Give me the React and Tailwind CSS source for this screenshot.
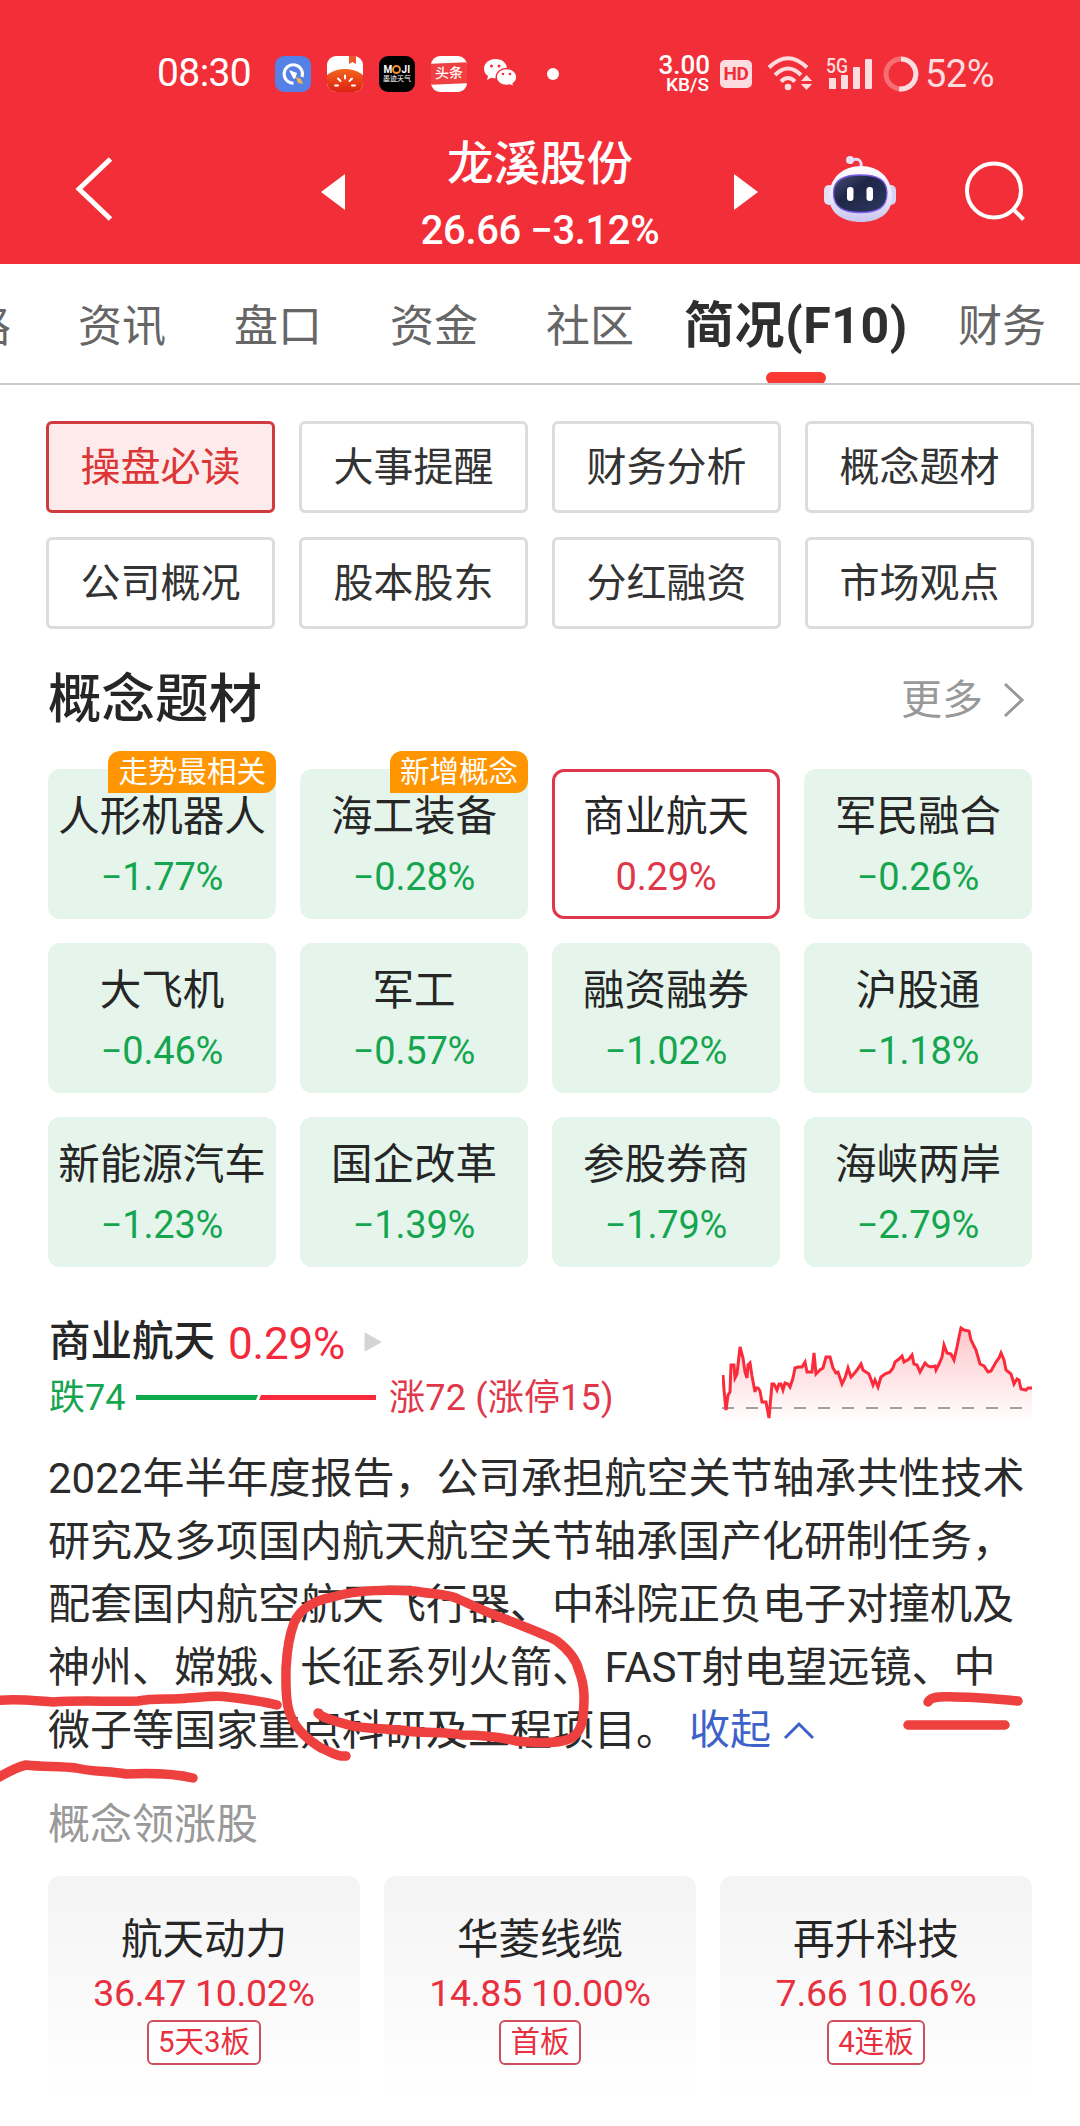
import React from "react"

const tabs = [
  { name: "资讯", className: "w-[156px]" },
  { name: "盘口", className: "w-[156px]" },
  { name: "资金", className: "w-[156px]" },
  { name: "社区", className: "w-[156px]" },
]

const sections = [
  "操盘必读",
  "大事提醒",
  "财务分析",
  "概念题材",
  "公司概况",
  "股本股东",
  "分红融资",
  "市场观点",
]

const concepts = [
  { name: "人形机器人", change: "−1.77%", badge: "走势最相关" },
  { name: "海工装备", change: "−0.28%", badge: "新增概念" },
  { name: "商业航天", change: "0.29%", active: true },
  { name: "军民融合", change: "−0.26%" },
  { name: "大飞机", change: "−0.46%" },
  { name: "军工", change: "−0.57%" },
  { name: "融资融券", change: "−1.02%" },
  { name: "沪股通", change: "−1.18%" },
  { name: "新能源汽车", change: "−1.23%" },
  { name: "国企改革", change: "−1.39%" },
  { name: "参股券商", change: "−1.79%" },
  { name: "海峡两岸", change: "−2.79%" },
]

const lines = [
  "2022年半年度报告，公司承担航空关节轴承共性技术",
  "研究及多项国内航天航空关节轴承国产化研制任务，",
  "配套国内航空航天飞行器、中科院正负电子对撞机及",
  "神州、嫦娥、长征系列火箭、 FAST射电望远镜、中",
]

const leaders = [
  { name: "航天动力", price: "36.47 10.02%", tag: "5天3板" },
  { name: "华菱线缆", price: "14.85 10.00%", tag: "首板" },
  { name: "再升科技", price: "7.66 10.06%", tag: "4连板" },
]

// intraday line of the selected concept
const points =
  "1,25 2,40 4,60 6,45 8,42 9,15 12,15 13,28 15,24 18,-3 21,8 23,22 25,28 26,15 28,13 30,26 33,42 34,38 36,38 38,41 40,52 44,52 47,68 50,34 52,34 55,40 57,34 59,34 61,40 63,33 66,34 68,37 71,28 73,18 76,17 80,17 83,12 85,22 90,22 92,3 94,24 98,20 101,18 104,7 108,7 111,18 114,23 116,22 120,34 123,28 126,18 129,27 131,25 135,20 139,14 141,20 144,22 147,24 151,35 153,30 156,37 159,27 163,24 168,22 171,18 173,12 177,9 180,6 182,12 187,9 190,5 192,14 195,15 198,22 203,13 206,16 209,17 213,16 214,20 217,14 220,7 222,-5 225,3 229,4 232,10 235,-3 237,-13 239,-22 242,-20 247,-19 249,-10 254,0 258,14 262,16 266,22 269,21 274,12 277,8 279,3 282,10 284,20 289,24 292,34 295,29 297,30 299,39 304,40 306,38 310,38"

class StatusBar extends React.Component {
  render() {
    return (
      <div className="h-[146px] pt-[1px] flex items-center text-white">
        <span className="ml-[157px] w-[118px] text-[39px] leading-none tracking-[-0.6px]">08:30</span>
        <div className="flex items-center gap-4">
          <svg width="36" height="36" viewBox="0 0 36 36">
            <rect width="36" height="36" rx="9" fill="#5580e6" />
            <path d="M27 21A9.2 9.2 0 1 0 18.500 27.200" fill="none" stroke="#fff" strokeWidth="3" />
            <path d="M14 14l8 3-1.500 5-2 1z" fill="#fff" />
            <path d="M21 21l5 2 2 5-5-1z" fill="#efb24d" />
          </svg>
          <svg width="36" height="36" viewBox="0 0 36 36">
            <defs>
              <clipPath id="tomatoBox">
                <rect width="36" height="36" rx="9" />
              </clipPath>
              <linearGradient id="tomato" x1="0" y1="0" x2="0" y2="1">
                <stop offset="0" stopColor="#f5641e" />
                <stop offset="0.700" stopColor="#dc2412" />
              </linearGradient>
            </defs>
            <g clipPath="url(#tomatoBox)">
              <rect width="36" height="36" fill="#fff" />
              <path d="M22 0h7v8l-3.500-2L22 8z" fill="#f0562a" />
              <ellipse cx="18" cy="29" rx="23" ry="16" fill="url(#tomato)" />
              <g stroke="#fff" strokeWidth="2" strokeLinecap="round">
                <path d="M8 29.500h3M11 22.500l2.500 2.500M18 19.500v3M25 22.500l-2.500 2.500M28 29.500h-3" />
              </g>
            </g>
          </svg>
          <div className="size-9 rounded-[9px] bg-black flex flex-col items-center justify-center leading-none">
            <div className="text-[10px] leading-[10px] font-bold tracking-[0.3px] flex items-center">
              M
              <i className="inline-block size-[9px] rounded-full border-2 border-[#ee8f32]" />
              JI
            </div>
            <div className="text-[7px] leading-[8px] whitespace-nowrap">墨迹天气</div>
          </div>
          <div className="size-9 rounded-[9px] bg-white flex items-center overflow-hidden">
            <div className="w-full h-[21px] bg-[#f04142] text-center text-[14px] leading-[20px] font-medium -skew-y-2">头条</div>
          </div>
          <svg width="36" height="32" viewBox="0 0 36 32">
            <path d="M12.500 1C6 1 1 5.300 1 10.700c0 3 1.600 5.600 4.100 7.400L4 22l4.300-2.300c1.300.4 2.700.6 4.200.6 6.500 0 11.500-4.300 11.500-9.700S19 1 12.500 1z" fill="#fff" />
            <path d="M23.500 10.500c-5.800 0-10.300 3.700-10.300 8.500s4.500 8.500 10.300 8.500c1.300 0 2.500-.2 3.600-.5l3.900 2-1-3.300c2.300-1.600 3.800-4 3.800-6.700 0-4.800-4.500-8.500-10.300-8.500z" fill="#fff" stroke="#f22f38" strokeWidth="1.300" />
            <g fill="#f22f38">
              <circle cx="8.500" cy="8" r="1.500" />
              <circle cx="16" cy="8" r="1.500" />
              <circle cx="20" cy="16" r="1.300" />
              <circle cx="27" cy="16" r="1.300" />
            </g>
          </svg>
        </div>
        <i className="ml-[28px] size-3 rounded-full bg-white" />
        <div className="ml-[99px] w-[54px] flex flex-col items-end text-right font-medium leading-none">
          <span className="pr-[2px] text-[26px] leading-[22px]">3.00</span>
          <span className="pr-[3px] text-[19px] leading-[18px]">KB/S</span>
        </div>
        <div className="ml-[8px] w-8 h-7 rounded-[5px] bg-[#fddcdf] text-[#f22f38] text-center text-[19px] leading-7 font-bold tracking-[-0.5px]">
          HD
        </div>
        <svg className="ml-[15px]" width="46" height="36" viewBox="0 0 46 36">
          <g fill="none" stroke="#fddcdf" strokeWidth="4">
            <path d="M2 11.500Q21 -7 40 11.500" />
            <path d="M8 19Q21 6 34 19" />
            <path d="M14 25.500Q21 18.500 28 25.500" />
          </g>
          <circle cx="21" cy="31" r="3.300" fill="#fddcdf" />
          <path d="M34 25l5.500-6 5.500 6zM34 28h11l-5.500 6z" fill="#fddcdf" />
        </svg>
        <svg className="ml-[13px]" width="49" height="36" viewBox="0 0 49 36">
          <g fill="#fddcdf">
            <text x="0" y="17" fontSize="21" fontWeight="500" textLength="22" lengthAdjust="spacingAndGlyphs">5G</text>
            <rect x="3" y="22" width="7" height="11" />
            <rect x="15" y="19" width="7" height="14" rx="1" />
            <rect x="27" y="11" width="7" height="22" rx="1" />
            <rect x="39" y="3" width="7" height="30" rx="1" />
          </g>
        </svg>
        <svg className="ml-[8px]" width="36" height="36" viewBox="0 0 36 36">
          <circle cx="18" cy="18" r="15" fill="none" stroke="#fff" strokeOpacity=".3" strokeWidth="5" />
          <path d="M18 3A15 15 0 1 1 16.100 32.900" fill="none" stroke="#fddcdf" strokeWidth="5" />
        </svg>
        <span className="ml-[6px] pt-px text-[38px] leading-none text-[#fddcdf] tracking-[-0.5px]">52%</span>
      </div>
    )
  }
}

class TitleBar extends React.Component {
  render() {
    return (
      <div className="h-[118px] -mt-[1px] flex items-start text-white">
        <svg className="ml-[74px] mt-[11px]" width="42" height="66" viewBox="0 0 42 66" fill="none" stroke="#fff" strokeWidth="5">
          <path d="M36.500 3L5 33l31.500 30" />
        </svg>
        <svg className="ml-[205px] mt-[29px]" width="25" height="36" viewBox="0 0 25 36">
          <path d="M24 0v36L0 18z" fill="#fff" />
        </svg>
        <div className="w-[388px] -mt-[13px] flex flex-col items-center">
          <h1 className="text-[46.5px] leading-[64px] font-medium">龙溪股份</h1>
          <p className="mt-[11px] text-[40px] leading-[48px] font-medium tracking-[-0.4px]">26.66 −3.12%</p>
        </div>
        <svg className="mt-[29px]" width="25" height="36" viewBox="0 0 25 36">
          <path d="M0 0v36l24-18z" fill="#fff" />
        </svg>
        <svg className="ml-[64px] mt-[10px]" width="74" height="68" viewBox="0 0 74 68">
          <defs>
            <linearGradient id="shell" x1="0" y1="0" x2="0" y2="1">
              <stop offset="0" stopColor="#fff" />
              <stop offset=".6" stopColor="#e6e4f8" />
              <stop offset="1" stopColor="#c9c5ee" />
            </linearGradient>
            <linearGradient id="visor" x1="0" y1="0" x2="1" y2="1">
              <stop offset="0" stopColor="#474c70" />
              <stop offset=".4" stopColor="#1f2747" />
              <stop offset="1" stopColor="#2d3760" />
            </linearGradient>
          </defs>
          <path d="M38 12c1-7-3-9-9-7" fill="none" stroke="#e5d9f3" strokeWidth="3" />
          <circle cx="27" cy="5" r="4" fill="#e4e0f6" />
          <rect x="1" y="30" width="10" height="20" rx="5" fill="#e3dff5" />
          <rect x="63" y="30" width="10" height="20" rx="5" fill="#d6d2f3" />
          <path d="M38 11C55 11 69 22 69 42C69 59 55 67 38 67S6 59 6 42C6 22 21 11 38 11z" fill="url(#shell)" />
          <path d="M37.500 20C55 20 64 25 64 38C64 53 54 57.500 37.500 57.500S10.500 53 10.500 38C10.500 25 20 20 37.500 20z" fill="url(#visor)" stroke="#7c5be8" strokeWidth="1.300" />
          <rect x="24" y="32" width="6.500" height="14" rx="3.200" fill="#fff" />
          <rect x="43.500" y="32" width="6.500" height="14" rx="3.200" fill="#fff" />
        </svg>
        <svg className="ml-[65px] mt-[13px]" width="64" height="64" viewBox="0 0 64 64" fill="none" stroke="#fff" strokeWidth="4">
          <circle cx="32" cy="32.500" r="27" />
          <path d="M51 51l10.500 10.500" />
        </svg>
      </div>
    )
  }
}

class Tabs extends React.Component {
  render() {
    return (
      <nav className="h-[121px] border-b-2 border-[#cbcbcb] flex overflow-hidden whitespace-nowrap text-[44px] leading-[126px] text-[#666]">
        <span className="w-[44px] -ml-[33px]">路</span>
        <div className="ml-[33px] flex">
          {tabs.map((tab) => (
            <span key={tab.name} className={`${tab.className} text-center`}>
              {tab.name}
            </span>
          ))}
        </div>
        <div className="ml-[17px] w-[222px] flex flex-col items-center text-[50px] font-bold text-[#2f2f2f]">
          <span className="h-[108px] leading-[125px] tracking-[0.6px]">简况(F10)</span>
          <i className="w-[60px] h-[12px] shrink-0 rounded-full bg-[#fa3a32]" />
        </div>
        <span className="ml-[51px]">财务</span>
      </nav>
    )
  }
}

class Concepts extends React.Component {
  render() {
    return (
      <div className="mt-[33px] ml-[48px] w-[984px] grid grid-cols-4 gap-6">
        {concepts.map((c) => (
          <div
            key={c.name}
            className={
              c.active
                ? "relative h-[150px] rounded-xl border-3 border-[#e0384a] text-[#e0384a] flex flex-col items-center"
                : "relative h-[150px] rounded-xl border-3 border-[#e5f5ec] bg-[#e5f5ec] text-[#16a54f] flex flex-col items-center"
            }
          >
            <span className="mt-[15px] h-[60px] whitespace-nowrap text-[41.5px] leading-[60px] text-[#262626]">{c.name}</span>
            <span className="mt-[8px] text-[38px] leading-[44px] tracking-[-0.2px]">{c.change}</span>
            {c.badge && (
              <span className="absolute -top-[21px] -right-[3px] h-[42px] px-[10px] rounded-xl rounded-bl-none bg-[#ff9500] text-white text-[29.5px] leading-[42px] whitespace-nowrap">
                {c.badge}
              </span>
            )}
          </div>
        ))}
      </div>
    )
  }
}

class Trend extends React.Component {
  render() {
    return (
      <div className="mt-[45px] ml-[49px] w-[983px] h-[120px] flex justify-between">
        <div>
          <div className="h-[60px] flex items-center">
            <span className="text-[41.5px] leading-[60px] font-medium text-[#262626]">商业航天</span>
            <span className="ml-[13px] pt-1 text-[44px] leading-[56px] text-[#f5293c] tracking-[-0.2px]">0.29%</span>
            <svg className="ml-[19px]" width="18" height="20" viewBox="0 0 18 20">
              <path d="M1 1l16 9-16 9z" fill="#d4d4d4" stroke="#d4d4d4" strokeLinejoin="round" />
            </svg>
          </div>
          <div className="h-[52px] flex items-center text-[36px] leading-[52px]">
            <span className="w-[87px] text-[#16a54f]">跌74</span>
            <svg width="241" height="6" viewBox="0 0 241 6">
              <path d="M0 0h122l-2 5H0z" fill="#0fa94b" />
              <path d="M125 0h115v5H123z" fill="#fa2b3a" />
            </svg>
            <span className="ml-[12px] text-[#e0384a] tracking-[0.2px]">涨72 (涨停15)</span>
          </div>
        </div>
        <svg className="mt-[3px]" width="310" height="120" viewBox="0 -35 310 120">
          <defs>
            <linearGradient id="fade" gradientUnits="userSpaceOnUse" x1="0" y1="-20" x2="0" y2="74">
              <stop offset="0" stopColor="#fa2b3a" stopOpacity=".26" />
              <stop offset="1" stopColor="#fa2b3a" stopOpacity="0" />
            </linearGradient>
          </defs>
          <polygon points={`0,74 ${points} 310,74`} fill="url(#fade)" />
          <path d="M0 58h310" stroke="#a8a0a0" strokeWidth="2" strokeDasharray="12 12" />
          <polyline points={points} fill="none" stroke="#fa2b3a" strokeWidth="3" />
        </svg>
      </div>
    )
  }
}

// strokes drawn by hand over the text
class Marks extends React.Component {
  render() {
    return (
      <svg className="absolute left-0 top-2" width="1080" height="370" viewBox="0 1440 1080 370" fill="none" stroke="#ee403f" strokeWidth="9.500" strokeLinecap="round" strokeLinejoin="round">
        <path d="M346 1756C336 1757 330 1751 321 1748C305 1738 293 1726 289 1711C285 1698 286 1683 286 1668C287 1650 289 1636 294 1623C300 1608 316 1600 333 1597C360 1589 390 1590 414 1591C430 1594 446 1594 456 1598C474 1606 490 1614 505 1619C524 1627 545 1634 557 1641C570 1651 577 1661 579 1671C586 1688 584 1705 583 1717C581 1731 575 1739 562 1741C548 1744 530 1742 516 1741C496 1736 478 1735 462 1735C444 1731 420 1734 400 1730C380 1728 362 1729 349 1725C335 1721 322 1718 318 1713" />
        <path d="M-6 1701C14 1698 35 1701 53 1702C80 1700 110 1702 138 1701C155 1698 170 1700 188 1698C204 1697 217 1695 228 1697C245 1699 262 1701 277 1705" />
        <path d="M-6 1780C6 1773 16 1767 26 1765C42 1767 61 1766 76 1768C92 1772 111 1771 126 1774C146 1773 172 1773 193 1778" />
        <path d="M928 1702C932 1695 944 1697 955 1697C975 1697 997 1699 1018 1701M908 1725h97" />
      </svg>
    )
  }
}

class App extends React.Component {
  render() {
    return (
      <div className="w-[1080px] h-[2126px] overflow-hidden bg-white font-[Roboto,'Noto_Sans_CJK_SC',sans-serif]">
        <header className="h-[264px] bg-[#f22f38]">
          <StatusBar />
          <TitleBar />
        </header>
        <Tabs />
        <div className="mt-[36px] ml-[46px] w-[988px] grid grid-cols-4 gap-6">
          {sections.map((s, i) => (
            <button
              key={s}
              className={
                i === 0
                  ? "h-[92px] pt-[1px] rounded-md border-3 border-[#cf3b3f] bg-[#fdeaea] text-[#dc3535] text-[40px] leading-[84px]"
                  : "h-[92px] pt-[1px] rounded-md border-3 border-[#dcdcdc] text-[#333] text-[40px] leading-[84px]"
              }
            >
              {s}
            </button>
          ))}
        </div>
        <div className="mt-[35px] ml-[48px] w-[977px] h-[72px] flex items-center justify-between">
          <h2 className="text-[53.5px] leading-[72px] font-medium text-[#262626]">概念题材</h2>
          <div className="flex items-center text-[41px] leading-[72px] text-[#999]">
            更多
            <svg className="ml-[20px]" width="22" height="38" viewBox="0 0 22 38" fill="none" stroke="#999" strokeWidth="3">
              <path d="M2 3l17 16L2 35" />
            </svg>
          </div>
        </div>
        <Concepts />
        <Trend />
        <div className="relative h-[363px] pt-[15px] pl-[48px] text-[42px] leading-[63px] text-[#2b2b2b] whitespace-nowrap">
          {lines.map((line) => (
            <p key={line}>{line}</p>
          ))}
          <p className="flex items-center">
            微子等国家重点科研及工程项目。
            <span className="ml-[11px] text-[41px] text-[#3e62c9]">收起</span>
            <svg className="ml-[12px]" width="32" height="20" viewBox="0 0 32 20" fill="none" stroke="#3e62c9" strokeWidth="3">
              <path d="M2 17L16 3l14 14" />
            </svg>
          </p>
          <Marks />
        </div>
        <h3 className="ml-[48px] text-[42px] leading-[60px] text-[#999]">概念领涨股</h3>
        <div className="mt-[21px] ml-[48px] w-[984px] grid grid-cols-3 gap-6">
          {leaders.map((s) => (
            <div key={s.name} className="h-[249px] pt-[34px] rounded-t-xl bg-linear-to-b from-[#f4f4f4] to-white to-90% flex flex-col items-center text-[#e8303f]">
              <span className="text-[41.5px] leading-[60px] text-[#262626]">{s.name}</span>
              <span className="mt-[1px] text-[37.5px] leading-[44px] tracking-[-0.3px]">{s.price}</span>
              <span className="mt-[5px] h-[45px] px-[9px] rounded-md border-2 border-[#cf4f60] bg-white text-[29.5px] leading-[40px]">{s.tag}</span>
            </div>
          ))}
        </div>
      </div>
    )
  }
}

export default App
